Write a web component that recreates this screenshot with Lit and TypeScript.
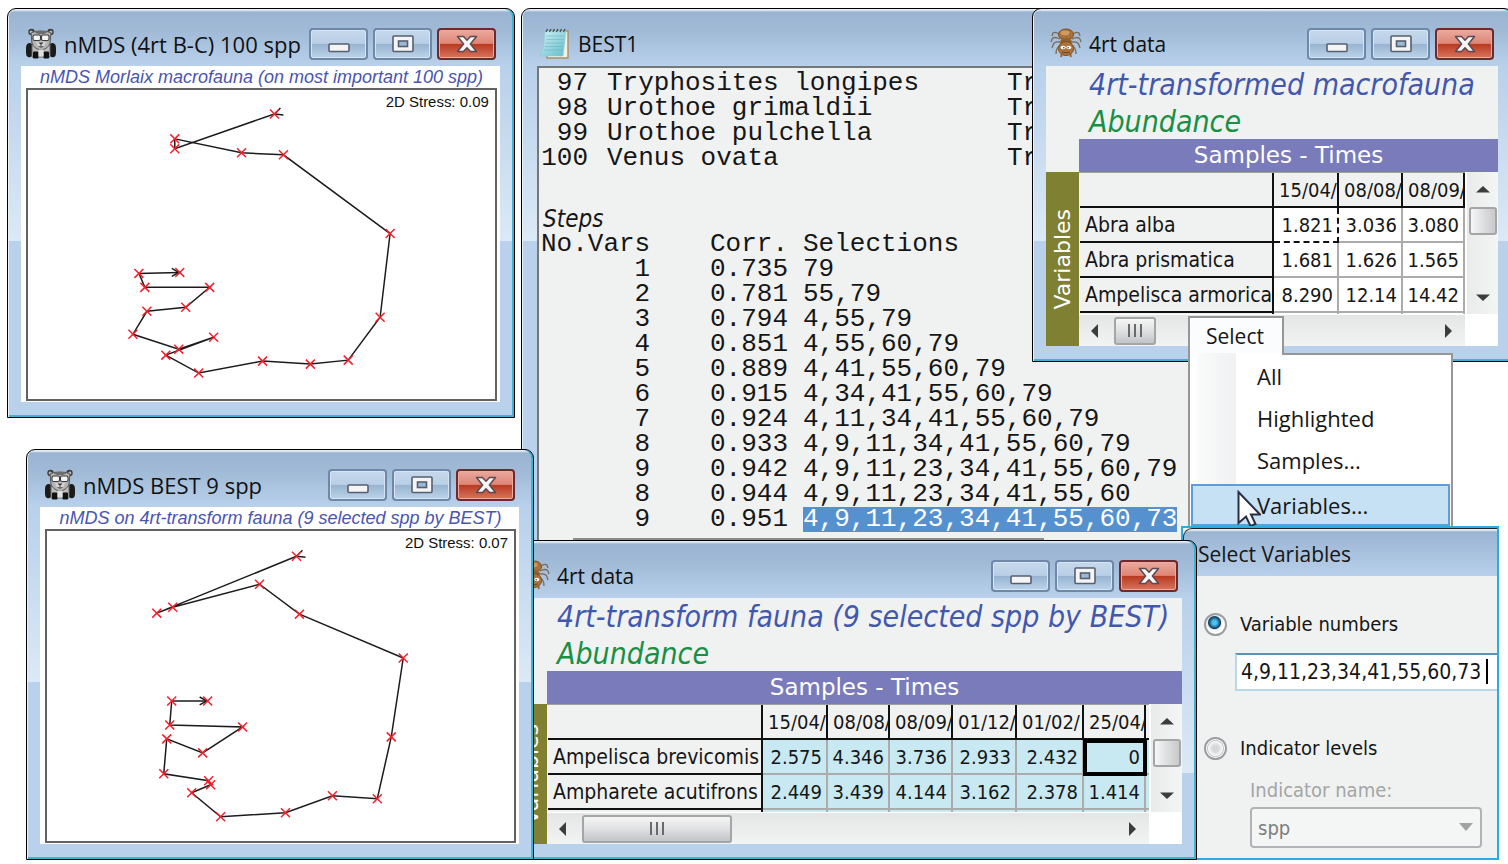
import { LitElement, html, svg, css, nothing } from "lit";
import { customElement, property } from "lit/decorators.js";
import { classMap } from "lit/directives/class-map.js";

type IconName = "bear" | "spider" | "notepad";

const bearIcon = html`<svg class="icon" viewBox="0 0 32 32" aria-hidden="true">
  <path d="M1 20 Q1 15 5 15 L7 16 L7 28 Q5 30 3 29 Q1 28 1 25Z" fill="#1b1b1b" />
  <path d="M31 20 Q31 15 27 15 L25 16 L25 28 Q27 30 29 29 Q31 28 31 25Z" fill="#1b1b1b" />
  <circle cx="6.5" cy="4" r="3.2" fill="#3b3b3b" /><circle cx="25.5" cy="4" r="3.2" fill="#3b3b3b" />
  <circle cx="6.2" cy="4" r="1.6" fill="#b9b9b9" /><circle cx="25.800" cy="4" r="1.6" fill="#b9b9b9" />
  <path d="M7 14 H25 V29 H7Z" fill="#bdbdbd" stroke="#666" stroke-width="1" />
  <path d="M6 5 Q8 3 16 3 Q24 3 26 5 L25 15 Q23 21 16 22 Q9 21 7 15Z" fill="#b4b4b4" stroke="#555" stroke-width="1" />
  <path d="M9 4 L13 6 L19 6 L23 4 L20 3 H12Z" fill="#6c6c6c" />
  <rect x="8" y="7" width="7.5" height="5.5" rx="1.5" fill="#f4f4f4" stroke="#3b3b3b" stroke-width="1.1" />
  <rect x="16.500" y="7" width="7.5" height="5.5" rx="1.5" fill="#f4f4f4" stroke="#3b3b3b" stroke-width="1.1" />
  <path d="M11 14 Q16 13 21 14 L19 19 Q16 21 13 19Z" fill="#d4d4d4" />
  <path d="M13.500 14.500 H18.500 L16 17Z" fill="#333" /><path d="M16 17 V19 M13.500 18.500 Q16 20 18.500 18.500" stroke="#444" fill="none" />
  <rect x="8" y="23.500" width="5.5" height="7" rx="1" fill="#111" /><rect x="18.500" y="23.500" width="5.5" height="7" rx="1" fill="#111" />
  <rect x="13.500" y="21.500" width="5" height="7" fill="#dedede" />
</svg>`;

const spiderIcon = html`<svg class="icon" viewBox="0 0 32 32" aria-hidden="true">
  <g fill="none" stroke="#7a6a58" stroke-width="1.3">
    <path d="M11 8 Q6 3 3 5 L2 8 M10 11 Q4 8 2 11 L1 14 M10 14 Q4 13 3 17 L2 20 M11 17 Q6 19 6 26" />
    <path d="M21 8 Q26 3 29 5 L30 8 M22 11 Q28 8 30 11 L31 14 M22 14 Q28 13 29 17 L30 20 M21 17 Q26 19 26 26" />
  </g>
  <path d="M12 25 L11 29 M20 25 L21 29" stroke="#a06a35" stroke-width="2" />
  <ellipse cx="16" cy="6.500" rx="7.500" ry="5.500" fill="#a8703a" stroke="#7c4d22" />
  <ellipse cx="15" cy="5" rx="4.500" ry="2.400" fill="#cf9a61" />
  <ellipse cx="16" cy="14" rx="6" ry="4" fill="#94602f" />
  <ellipse cx="16" cy="20.500" rx="7.600" ry="7" fill="#ab733c" stroke="#7c4d22" />
  <ellipse cx="13.200" cy="19.500" rx="2.500" ry="1.800" fill="#fff" /><ellipse cx="18.800" cy="19.500" rx="2.500" ry="1.800" fill="#fff" />
  <circle cx="13.800" cy="19.800" r=".8" fill="#444" /><circle cx="18.200" cy="19.800" r=".8" fill="#444" />
  <path d="M12 24 Q16 25.500 20 24" stroke="#6d421b" fill="none" />
</svg>`;

const notepadIcon = html`<svg class="icon" viewBox="0 0 32 32" aria-hidden="true">
  <defs><linearGradient id="pad" x1="0" y1="0" x2="1" y2="1"><stop offset="0" stop-color="#d3f2f5" /><stop offset="1" stop-color="#62bccb" /></linearGradient></defs>
  <path d="M8 3 H29 V30 H8Z" fill="#f5f1e2" stroke="#a3916a" stroke-width="1.4" />
  <path d="M6 3 H27 L24 28 H1 Q5 22 6 3Z" fill="url(#pad)" stroke="#8ccdd6" stroke-width=".6" />
  <path d="M7 8 H25 M7 11.5 H25 M6 15 H25 M6 18.5 H24 M5 22 H24" stroke="#4fa9b8" stroke-width=".7" opacity=".55" />
  <path d="M7 4 l1.5 -3 M10.5 4 l1.5 -3 M14 4 l1.5 -3 M17.5 4 l1.5 -3 M21 4 l1.5 -3 M24.5 4 l1.5 -3" stroke="#3d4a50" stroke-width="1.2" />
</svg>`;

const icons = { bear: bearIcon, spider: spiderIcon, notepad: notepadIcon };

@customElement("mdi-window")
class MdiWindow extends LitElement {
  @property() heading = "";
  @property() icon: IconName = "bear";
  @property({ type: Boolean }) controls = false;
  @property({ type: Boolean }) large = false;

  static styles = css`
    :host { display: block; box-sizing: border-box; }
    .frame {
      box-sizing: border-box; height: 100%; display: flex; flex-direction: column;
      border: 1px solid #000; border-radius: 9px 9px 0 0; padding: 0 14px 15px 13px;
      background: linear-gradient(#e4eef7 0, #e4eef7 1px, #9ab4d2 3px, #9fb9d6 20px, #b8d0ea 56px, #c3d8ee 110px, #dce9f6 232px, #b9d1ea 232px);
      box-shadow: inset 1px 0 0 #e9f1f9, inset -2px 0 0 #3cb4d0, inset 0 -2px 0 #3cb4d0;
    }
    .title {
      flex: none; height: 44px; padding: 13px 4px 0 4px; display: flex; align-items: center; gap: 7px;
    }
    .icon { width: 32px; height: 32px; flex: none; }
    h2 {
      flex: 1; margin: 0; white-space: nowrap; color: #111;
      font: 400 21px/30px "Open Sans", sans-serif;
    }
    h2.large { font-size: 22px; }
    .controls { display: flex; gap: 5px; }
    button {
      box-sizing: border-box; width: 59px; height: 32px; padding: 0; display: grid; place-items: center;
      border: 2px solid #7088a8; border-radius: 4px;
      background: linear-gradient(#c6d8eb, #b9cfe6 48%, #97b3d0 50%, #bdd4ea);
      box-shadow: inset 0 0 0 1px #d6e5f3;
    }
    .close {
      border-color: #6d2a2c;
      background: linear-gradient(#eba99e, #dd8676 48%, #b8391f 50%, #d9755e);
      box-shadow: inset 0 0 0 1px #eeaa9f;
    }
    button svg { width: 24px; height: 20px; }
    .body { flex: 1; min-height: 0; display: flex; flex-direction: column; }
  `;

  render() {
    return html`<section class="frame">
      <header class="title">
        ${icons[this.icon]}
        <h2 class=${classMap({ large: this.large })}>${this.heading}</h2>
        ${this.controls
          ? html`<div class="controls">
              <button aria-label="Minimize"><svg viewBox="0 0 24 20"><rect x="2" y="10" width="20" height="7.5" rx="1" fill="#f4f4f4" stroke="#565f70" stroke-width="1.6" /></svg></button>
              <button aria-label="Restore"><svg viewBox="0 0 24 20"><rect x="2" y="2" width="20" height="15.5" rx="1" fill="#f4f4f4" stroke="#565f70" stroke-width="1.6" /><rect x="7.5" y="7" width="9" height="5.5" fill="#9db8d5" stroke="#565f70" stroke-width="1.6" /></svg></button>
              <button class="close" aria-label="Close"><svg viewBox="0 0 24 20"><path d="M2.5 2.5 H8.5 L12 6.2 L15.5 2.5 H21.5 L15.4 10 L21.5 17.5 H15.5 L12 13.8 L8.5 17.5 H2.5 L8.6 10Z" fill="#f5f5f5" stroke="#5b4a52" stroke-width="1.5" stroke-linejoin="round" /></svg></button>
            </div>`
          : nothing}
      </header>
      <div class="body"><slot></slot></div>
    </section>`;
  }
}

type Point = [number, number];

@customElement("mds-plot")
class MdsPlot extends LitElement {
  @property() caption = "";
  @property() stress = "";
  @property({ attribute: false }) origin: Point = [0, 0];
  @property({ attribute: false }) points: Point[] = [];

  static styles = css`
    :host { flex: 1; min-height: 0; display: flex; flex-direction: column; background: #fff; padding: 0 3px 1px 5px; }
    h3 { margin: 0; height: 22px; text-align: center; white-space: nowrap; color: #4a55b0; font: italic 400 18px/22px "Liberation Sans", sans-serif; }
    .plot { box-sizing: border-box; flex: 1; min-height: 0; width: 100%; border: 2px solid #626262; display: block; }
    .stress { font: 15px "Liberation Sans", sans-serif; fill: #111; }
    .path { fill: none; stroke: #1c1c1c; stroke-width: 1.5; }
    .mark { fill: none; stroke: #f3202c; stroke-width: 1.5; }
  `;

  render() {
    const [ox, oy] = this.origin;
    const pts = this.points;
    const [sx, sy] = pts[0];
    const [ex, ey] = pts[pts.length - 1];
    return html`<h3>${this.caption}</h3>
      <svg class="plot" viewBox="${ox} ${oy} 468 310" role="img" aria-label=${this.caption}>
        <text class="stress" x=${ox + 462} y=${oy + 17} text-anchor="end">2D Stress: ${this.stress}</text>
        <polyline class="path" points=${pts.map((p) => p.join(",")).join(" ")} />
        <path class="path" d="M${sx} ${sy} l6 -6 M${sx} ${sy} l9 1 M${ex - 8} ${ey - 4} L${ex - 1} ${ey} L${ex - 8} ${ey + 4}" />
        ${pts.map(([x, y]) => svg`<path class="mark" d="M${x - 4.5} ${y - 4.5} l9 9 m0 -9 l-9 9" />`)}
      </svg>`;
  }
}

interface Row { name: string; values: string[]; }

@customElement("data-sheet")
class DataSheet extends LitElement {
  @property() heading = "";
  @property({ attribute: false }) dates: string[] = [];
  @property({ attribute: false }) rows: Row[] = [];
  @property({ attribute: false }) widths: number[] = [];
  @property({ type: Boolean }) highlighted = false;
  @property({ type: Number }) thumb = 42;

  static styles = css`
    :host { flex: 1; min-height: 0; display: grid; grid-template: auto 33px 1fr / 33px 1fr; background: #f0f2f1; overflow: hidden; }
    .heads { grid-column: 2; height: 73px; padding-left: 10px; white-space: nowrap; }
    h3, p { margin: 0; font: italic 400 30px/37px "DejaVu Sans Condensed", "DejaVu Sans", sans-serif; }
    h3 { color: #4257ae; }
    p { color: #178f45; }
    .samples { grid-column: 2; background: #7a7bba; color: #fff; text-align: center; font: 23px/32px "DejaVu Sans", sans-serif; }
    .variables { display: grid; place-items: center; background: #808033; color: #fff; }
    .variables span { writing-mode: vertical-rl; transform: rotate(180deg); font: 22px/32px "DejaVu Sans", sans-serif; }
    .grid { min-width: 0; min-height: 0; display: grid; grid-template: 1fr 32px / 1fr 33px; background: #fff; }
    .scroller { overflow: hidden; background: #f0f2f1; padding-left: 1px; border-top: 1px solid #a0a0a0; }
    table { table-layout: fixed; border-collapse: separate; border-spacing: 0; width: 0; font: 20px/31px "DejaVu Sans Condensed", "DejaVu Sans", sans-serif; color: #161616; }
    th, td { box-sizing: border-box; height: 35px; padding: 2px 0 0 5px; overflow: hidden; white-space: nowrap; font-weight: 400; text-align: left; border-right: 2px solid #111; border-bottom: 2px solid #111; background: #f0f2f1; }
    tbody th { font-size: 21px; }
    td { text-align: right; padding: 2px 4px 0 0; background: #fff; border-color: #ababab; }
    .highlighted td { background: #c8e9f2; }
    .focus { border-right: 2px dashed #111; border-bottom: 2px dashed #111; }
    .highlighted .current { outline: 4px solid #000; outline-offset: -3px; }
    .stub th, .stub td { border-bottom: 0; }
    .vbar { box-sizing: border-box; display: flex; flex-direction: column; align-items: center; margin-left: 2px; padding-top: 11px; background: linear-gradient(90deg, #e9ebeb, #f4f5f5); }
    .hbar { box-sizing: border-box; display: flex; align-items: center; padding: 0 10px 0 9px; margin-top: 1px; background: linear-gradient(#e4e6e6, #f2f3f3); }
    .arrow { flex: none; width: 14px; height: 14px; fill: #3c3c3c; }
    .vthumb, .hthumb { box-sizing: border-box; border: 2px solid #a3a5a7; border-radius: 3px; }
    .vthumb { width: 28px; height: 28px; margin-top: 10px; background: linear-gradient(90deg, #f6f6f6, #dedfe1 50%, #c9c9cc); }
    .hthumb { height: 28px; margin: 0 auto 0 12px; display: grid; place-items: center; background: linear-gradient(#f6f6f6, #dfe0e2 50%, #c3c4c7); }
    .grip { width: 15px; height: 13px; background: repeating-linear-gradient(90deg, #6a6a6a 0 2px, transparent 2px 6px); }
    .down { margin: auto 0 10px; }
  `;

  render() {
    return html`
      <div class="heads"><h3>${this.heading}</h3><p>Abundance</p></div>
      <div class="samples">Samples - Times</div>
      <div class="variables"><span>Variables</span></div>
      <div class="grid">
        <div class="scroller">
          <table class=${classMap({ highlighted: this.highlighted })}>
            <colgroup>${this.widths.map((w) => html`<col width=${w} />`)}</colgroup>
            <thead><tr><th></th>${this.dates.map((d) => html`<th scope="col">${d}</th>`)}</tr></thead>
            <tbody>
              ${this.rows.map((r, i) => html`<tr>
                <th scope="row">${r.name}</th>
                ${r.values.map((v, j) => html`<td class=${classMap({ focus: !this.highlighted && i === 0 && j === 0, current: i === 0 && v === "0" })}>${v}</td>`)}
              </tr>`)}
              <tr class="stub"><th></th>${this.dates.map(() => html`<td></td>`)}</tr>
            </tbody>
          </table>
        </div>
        <div class="vbar">
          <svg class="arrow" viewBox="0 0 14 14"><path d="M7 3 L14 9.5 H0Z" /></svg>
          <div class="vthumb"></div>
          <svg class="arrow down" viewBox="0 0 14 14"><path d="M7 11 L14 4.5 H0Z" /></svg>
        </div>
        <div class="hbar">
          <svg class="arrow" viewBox="0 0 14 14"><path d="M3 7 L10 0 V14Z" /></svg>
          <div class="hthumb" style="width:${this.thumb}px"><div class="grip"></div></div>
          <svg class="arrow" viewBox="0 0 14 14"><path d="M11 7 L4 0 V14Z" /></svg>
        </div>
      </div>`;
  }
}

const plotAll: Point[] = [[275, 114], [175, 149], [175, 139], [242, 153], [284, 155], [391, 234], [381, 318], [349, 361], [311, 365], [263, 362], [199, 374], [166, 356], [214, 338], [179, 350], [133, 335], [147, 312], [186, 308], [210, 288], [145, 288], [139, 274], [180, 273]];
const plotBest: Point[] = [[297, 555], [157, 612], [173, 606], [260, 583], [300, 613], [404, 657], [392, 736], [378, 798], [333, 795], [286, 812], [221, 816], [192, 792], [211, 784], [209, 780], [164, 773], [167, 738], [203, 752], [243, 726], [170, 724], [172, 700], [208, 700]];

const species: [string, string][] = [["97", "Tryphosites longipes"], ["98", "Urothoe grimaldii"], ["99", "Urothoe pulchella"], ["100", "Venus ovata"]];
const steps: [string, string, string][] = [
  ["1", "0.735", "79"],
  ["2", "0.781", "55,79"],
  ["3", "0.794", "4,55,79"],
  ["4", "0.851", "4,55,60,79"],
  ["5", "0.889", "4,41,55,60,79"],
  ["6", "0.915", "4,34,41,55,60,79"],
  ["7", "0.924", "4,11,34,41,55,60,79"],
  ["8", "0.933", "4,9,11,34,41,55,60,79"],
  ["9", "0.942", "4,9,11,23,34,41,55,60,79"],
  ["8", "0.944", "4,9,11,23,34,41,55,60"],
  ["9", "0.951", "4,9,11,23,34,41,55,60,73"],
];

const armorica: Row[] = [
  { name: "Abra alba", values: ["1.821", "3.036", "3.080"] },
  { name: "Abra prismatica", values: ["1.681", "1.626", "1.565"] },
  { name: "Ampelisca armorica", values: ["8.290", "12.14", "14.42"] },
];
const best: Row[] = [
  { name: "Ampelisca brevicomis", values: ["2.575", "4.346", "3.736", "2.933", "2.432", "0", ""] },
  { name: "Ampharete acutifrons", values: ["2.449", "3.439", "4.144", "3.162", "2.378", "1.414", ""] },
];

@customElement("app-root")
class AppRoot extends LitElement {
  static styles = css`
    :host { display: block; }
    .desktop { position: relative; height: 100vh; overflow: hidden; background: #fff; }
    .win { position: absolute; }
    .all { left: 7px; top: 8px; width: 508px; height: 410px; }
    .results { left: 521px; top: 8px; width: 690px; height: 560px; }
    .sheet { left: 1032px; right: -5px; top: 8px; height: 354px; }
    .nine { left: 26px; top: 449px; width: 508px; height: 411px; z-index: 5; }
    .sheet-nine { left: 500px; top: 540px; width: 697px; height: 320px; z-index: 4; }

    .log { flex: 1; margin-left: 2px; padding: 3px 2px 0; background: #f0f2f1; border: 2px solid #777; border-width: 2px 0 0 2px; color: #161616; font: 26px/25px "Liberation Mono", monospace; white-space: nowrap; overflow: hidden; }
    .log table { border-collapse: collapse; table-layout: fixed; width: 100%; }
    .log th, .log td { padding: 0; height: 25px; font-weight: 400; text-align: left; }
    .log h3 { margin: 36px 0 0 2px; font: italic 400 24px/25px "DejaVu Sans Condensed", "DejaVu Sans", sans-serif; }
    .log .num { width: 47px; text-align: right; }
    .log .species { width: 400px; padding-left: 19px; }
    .log .vars { width: 109px; text-align: right; }
    .log .corr { width: 93px; padding-left: 60px; }
    .log mark { background: #5590cf; color: #fff; display: inline-block; }
    .log .edge { margin: 6px 150px 0 32px; border-top: 2px solid #8b8b8b; }

    .menu { position: absolute; left: 1188px; top: 316px; width: 265px; z-index: 2; font: 22px/42px "Open Sans", sans-serif; color: #161616; }
    .menu button { font: inherit; color: inherit; text-align: left; border: 0; padding: 0; background: none; box-sizing: border-box; }
    .menu .tab { display: block; width: 96px; height: 38px; line-height: 34px; padding-left: 16px; font-size: 21px; background: #fbfcfd; border: 2px solid #979797; border-bottom: 0; }
    .menu ul { margin: -1px 0 0; padding: 2px 1px 0 1px; list-style: none; background: linear-gradient(#979797, #979797) top right / 169px 2px no-repeat, linear-gradient(90deg, #fff 6px, #f9fafa 8px, #f0f1f2 46px, #fff 46px); border: 2px solid #979797; border-top: 0; }
    .menu li button { display: block; width: 100%; height: 42px; padding-left: 66px; line-height: 40px; }
    .menu li .hot { margin-top: 3px; padding-left: 64px; line-height: 34px; background: #c6e0f4; border: 2px solid #5d9ddb; }
    .cursor { position: absolute; left: 1237px; top: 490px; width: 24px; height: 36px; z-index: 2; }

    .dialog { box-sizing: border-box; position: absolute; left: 1181px; top: 526px; width: 318px; height: 334px; z-index: 3; overflow: hidden; border: 2px solid #2bace2; background: #f0f2f1; color: #161616; font: 20px/28px "DejaVu Sans Condensed", "DejaVu Sans", sans-serif; }
    .dialog h2 { margin: 0; height: 47px; padding-left: 14px; border-top: 1px solid #222; border-left: 1px solid #222; border-radius: 9px 0 0 0; background: linear-gradient(#e4eef7 1px, #9ab4d2 3px, #b8d0ea); font: 400 21px/50px "Open Sans", sans-serif; }
    .fields { padding: 32px 0 0 21px; }
    .choice { display: flex; align-items: center; gap: 13px; height: 32px; }
    .choice input { appearance: none; box-sizing: border-box; margin: 0; width: 23px; height: 23px; border: 2px solid #9b9ea1; border-radius: 50%; background: radial-gradient(#d5d7d9 0 3px, #f7f7f7 7px, #c4c7c9 8px, #fff 9px); }
    .choice input:checked { background: radial-gradient(circle at 45% 40%, #4fc3ef 0 2px, #15608c 5px, #123a58 6px, #e8eaeb 7px, #fff 9px); }
    .entry { position: relative; margin: 13px 0 41px 31px; }
    .entry input { box-sizing: border-box; display: block; width: 100%; height: 38px; padding: 0 0 0 4px; border: 2px solid #b9d9ea; border-top-color: #5a92b8; border-right: 0; background: #fff; color: #161616; font: 21px "DejaVu Sans Condensed", "DejaVu Sans", sans-serif; }
    .entry::after { content: ""; position: absolute; left: 251px; top: 6px; width: 2px; height: 25px; background: #000; }
    .name { display: block; margin: 12px 0 3px 46px; color: #a3a5a6; }
    .combo { position: relative; margin: 0 15px 0 46px; }
    .combo select { appearance: none; box-sizing: border-box; width: 100%; height: 41px; padding: 0 0 0 6px; border: 2px solid #b1b4b6; border-radius: 4px; background: #f4f5f5; color: #7c7e80; opacity: 1; font: inherit; }
    .combo svg { position: absolute; right: 8px; top: 15px; width: 16px; height: 10px; fill: #a0a2a4; }
  `;

  render() {
    return html`<main class="desktop">
      <mdi-window class="win all" heading="nMDS (4rt B-C) 100 spp" icon="bear" controls large>
        <mds-plot caption="nMDS Morlaix macrofauna (on most important 100 spp)" stress="0.09" .origin=${[28, 90] as Point} .points=${plotAll}></mds-plot>
      </mdi-window>

      <mdi-window class="win results" heading="BEST1" icon="notepad">
        <div class="log">
          <table>
            <tbody>${species.map(([n, s]) => html`<tr><td class="num">${n}</td><td class="species">${s}</td><td>Tr</td></tr>`)}</tbody>
          </table>
          <h3>Steps</h3>
          <table>
            <thead><tr><th class="vars">No.Vars</th><th class="corr">Corr.</th><th>Selections</th></tr></thead>
            <tbody>${steps.map(([n, c, s], i) => html`<tr><td class="vars">${n}</td><td class="corr">${c}</td><td>${i === steps.length - 1 ? html`<mark>${s}</mark>` : s}</td></tr>`)}</tbody>
          </table>
          <div class="edge"></div>
        </div>
      </mdi-window>

      <mdi-window class="win sheet" heading="4rt data" icon="spider" controls>
        <data-sheet heading="4rt-transformed macrofauna" .dates=${["15/04/", "08/08/", "08/09/"]} .rows=${armorica} .widths=${[194, 65, 64, 62]} thumb="42"></data-sheet>
      </mdi-window>

      <nav class="menu" aria-label="Select">
        <button class="tab">Select</button>
        <ul>
          <li><button>All</button></li>
          <li><button>Highlighted</button></li>
          <li><button>Samples...</button></li>
          <li><button class="hot">Variables...</button></li>
        </ul>
      </nav>
      <svg class="cursor" viewBox="0 0 24 36" aria-hidden="true"><path d="M1.5 2 V33 L9 26.500 L13.500 36 L18.500 34 L14 24.500 H23Z" fill="#fff" stroke="#2a2f45" stroke-width="2" /></svg>

      <form class="dialog">
        <h2>Select Variables</h2>
        <div class="fields">
          <div class="choice"><input type="radio" name="mode" id="numbers" checked /><label for="numbers">Variable numbers</label></div>
          <div class="entry"><input type="text" aria-label="Variable numbers" value="4,9,11,23,34,41,55,60,73" /></div>
          <div class="choice"><input type="radio" name="mode" id="levels" /><label for="levels">Indicator levels</label></div>
          <label class="name" for="indicator">Indicator name:</label>
          <div class="combo">
            <select id="indicator" disabled><option>spp</option></select>
            <svg viewBox="0 0 16 10" aria-hidden="true"><path d="M1 1 H15 L8 9Z" /></svg>
          </div>
        </div>
      </form>

      <mdi-window class="win sheet-nine" heading="4rt data" icon="spider" controls>
        <data-sheet heading="4rt-transform fauna (9 selected spp by BEST)" .dates=${["15/04/", "08/08/", "08/09/", "01/12/", "01/02/", "25/04/", ""]} .rows=${best} .widths=${[215, 65, 62, 63, 64, 67, 62, 40]} highlighted thumb="150"></data-sheet>
      </mdi-window>

      <mdi-window class="win nine" heading="nMDS BEST 9 spp" icon="bear" controls large>
        <mds-plot caption="nMDS on 4rt-transform fauna (9 selected spp by BEST)" stress="0.07" .origin=${[47, 530] as Point} .points=${plotBest}></mds-plot>
      </mdi-window>
    </main>`;
  }
}
